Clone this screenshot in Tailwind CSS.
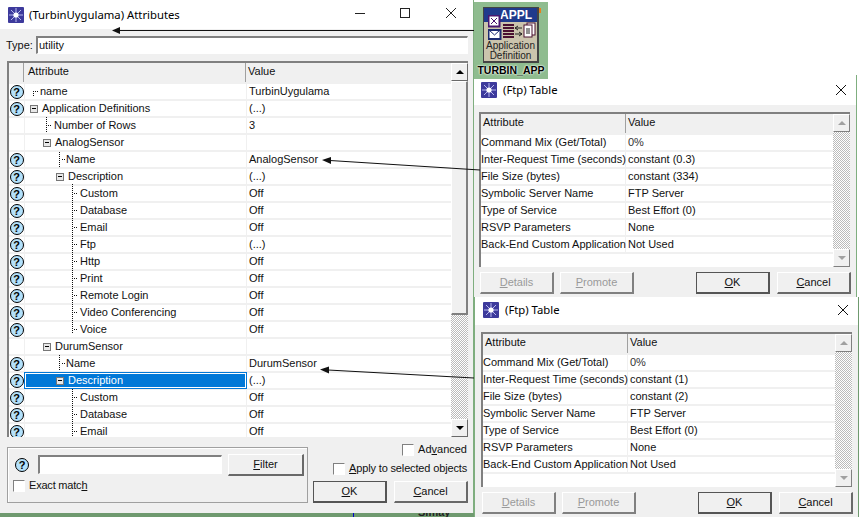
<!DOCTYPE html>
<html><head><meta charset="utf-8"><script src="https://cdn.jsdelivr.net/npm/@tailwindcss/browser@4"></script></head>
<body class="m-0">
<div class="relative w-[862px] h-[517px] overflow-hidden bg-white font-['Liberation_Sans',sans-serif] text-[11px] leading-[15px] text-[#111]">

<!-- desktop behind the windows -->
<div class="absolute left-0 top-[513px] w-[475px] h-[4px] bg-[#6f9a6f] overflow-hidden"><span class="absolute left-[353px] top-0 w-px h-[4px] bg-[#00c]"></span></div>
<div class="absolute left-[418px] top-[505px] text-[11px] font-bold text-[#222]">Simay</div>
<div class="absolute left-[856px] top-[75px] w-px h-[222px] bg-[#7fae7f]"></div>
<div class="absolute left-[857px] top-[297px] w-[2px] h-[220px] bg-[#6f9a6f]"></div>

<!-- main window -->
<div class="absolute left-0 top-0 w-[474px] h-[513px] bg-[#f0f0f0] border-r border-[#7fae7f] flex flex-col">
  <div class="h-[29px] bg-white flex items-center pl-[8px] shrink-0">
    <svg width="16" height="16" viewBox="0 0 16 16" class="shrink-0"><rect width="16" height="16" rx="1" fill="#3d3a9c"/><path d="M8 1V15M1 8H15M3 3L13 13M13 3L3 13" stroke="#b8b8ee" stroke-width="1"/><circle cx="8" cy="8" r="2.6" fill="#fff"/></svg>
    <span class="ml-[5px] font-['Noto_Sans',sans-serif] text-[11.3px] text-black">(TurbinUygulama) Attributes</span>
    <svg width="102" height="16" viewBox="0 0 102 16" class="ml-auto mr-[16px] shrink-0 self-start mt-[6px]"><path d="M0 7.5H10" stroke="#222"/><rect x="45.5" y="2.5" width="9" height="9" fill="none" stroke="#222"/><path d="M91 2L101 12M101 2L91 12" stroke="#222"/></svg>
  </div>
  <div class="flex items-center mt-[7px] pl-[6px] h-[18px] shrink-0">
    <span class="w-[30px]">Type:</span>
    <div class="w-[432px] h-[18px] bg-white border-t-2 border-l-2 border-[#808080] border-r border-b border-r-white border-b-white pl-[1px] leading-[14px]">utility</div>
  </div>

  <div class="relative ml-[7px] mt-[7px] w-[461px] h-[376px] overflow-hidden flex shrink-0 border-t-2 border-l-2 border-[#808080]">
    <div class="w-[442px] flex flex-col">
      <div class="flex h-[19px] bg-[#f0f0f0] shrink-0 mb-[2px]">
        <div class="w-[15px] border-r border-[#a0a0a0]"></div>
        <div class="w-[222px] pl-[4px] border-r border-[#a0a0a0] leading-[16px]">Attribute</div>
        <div class="flex-1 pl-[2px] leading-[16px]">Value</div>
      </div>

      <div class="flex h-[15px] mb-[2px] shrink-0"><div class="w-[15px] bg-white flex items-center justify-center mr-px"><span class="w-[14px] h-[14px] rounded-full border border-black bg-[#b3e1fb] text-[11px] leading-[12px] font-bold text-center text-black">?</span></div><div class="w-[221px] bg-white mr-px pl-[15px]">name</div><div class="flex-1 bg-white pl-[2px]">TurbinUygulama</div></div>
      <div class="flex h-[15px] mb-[2px] shrink-0"><div class="w-[15px] bg-white flex items-center justify-center mr-px"><span class="w-[14px] h-[14px] rounded-full border border-black bg-[#b3e1fb] text-[11px] leading-[12px] font-bold text-center text-black">?</span></div><div class="w-[221px] bg-white mr-px pl-[5px] flex items-center"><span class="w-[8px] h-[8px] bg-[#e8e8e8] border border-[#777] flex items-center justify-center mr-[4px]"><span class="w-[4px] h-px bg-black"></span></span>Application Definitions</div><div class="flex-1 bg-white pl-[2px]">(...)</div></div>
      <div class="flex h-[15px] mb-[2px] shrink-0"><div class="w-[15px] bg-white mr-px"></div><div class="w-[221px] bg-white mr-px pl-[29px]">Number of Rows</div><div class="flex-1 bg-white pl-[2px]">3</div></div>
      <div class="flex h-[15px] mb-[2px] shrink-0"><div class="w-[15px] bg-white mr-px"></div><div class="w-[221px] bg-white mr-px pl-[18px] flex items-center"><span class="w-[8px] h-[8px] bg-[#e8e8e8] border border-[#777] flex items-center justify-center mr-[4px]"><span class="w-[4px] h-px bg-black"></span></span>AnalogSensor</div><div class="flex-1 bg-white pl-[2px]"></div></div>
      <div class="flex h-[15px] mb-[2px] shrink-0"><div class="w-[15px] bg-white flex items-center justify-center mr-px"><span class="w-[14px] h-[14px] rounded-full border border-black bg-[#b3e1fb] text-[11px] leading-[12px] font-bold text-center text-black">?</span></div><div class="w-[221px] bg-white mr-px pl-[41px]">Name</div><div class="flex-1 bg-white pl-[2px]">AnalogSensor</div></div>
      <div class="flex h-[15px] mb-[2px] shrink-0"><div class="w-[15px] bg-white flex items-center justify-center mr-px"><span class="w-[14px] h-[14px] rounded-full border border-black bg-[#b3e1fb] text-[11px] leading-[12px] font-bold text-center text-black">?</span></div><div class="w-[221px] bg-white mr-px pl-[31px] flex items-center"><span class="w-[8px] h-[8px] bg-[#e8e8e8] border border-[#777] flex items-center justify-center mr-[4px]"><span class="w-[4px] h-px bg-black"></span></span>Description</div><div class="flex-1 bg-white pl-[2px]">(...)</div></div>
      <div class="flex h-[15px] mb-[2px] shrink-0"><div class="w-[15px] bg-white flex items-center justify-center mr-px"><span class="w-[14px] h-[14px] rounded-full border border-black bg-[#b3e1fb] text-[11px] leading-[12px] font-bold text-center text-black">?</span></div><div class="w-[221px] bg-white mr-px pl-[55px]">Custom</div><div class="flex-1 bg-white pl-[2px]">Off</div></div>
      <div class="flex h-[15px] mb-[2px] shrink-0"><div class="w-[15px] bg-white flex items-center justify-center mr-px"><span class="w-[14px] h-[14px] rounded-full border border-black bg-[#b3e1fb] text-[11px] leading-[12px] font-bold text-center text-black">?</span></div><div class="w-[221px] bg-white mr-px pl-[55px]">Database</div><div class="flex-1 bg-white pl-[2px]">Off</div></div>
      <div class="flex h-[15px] mb-[2px] shrink-0"><div class="w-[15px] bg-white flex items-center justify-center mr-px"><span class="w-[14px] h-[14px] rounded-full border border-black bg-[#b3e1fb] text-[11px] leading-[12px] font-bold text-center text-black">?</span></div><div class="w-[221px] bg-white mr-px pl-[55px]">Email</div><div class="flex-1 bg-white pl-[2px]">Off</div></div>
      <div class="flex h-[15px] mb-[2px] shrink-0"><div class="w-[15px] bg-white flex items-center justify-center mr-px"><span class="w-[14px] h-[14px] rounded-full border border-black bg-[#b3e1fb] text-[11px] leading-[12px] font-bold text-center text-black">?</span></div><div class="w-[221px] bg-white mr-px pl-[55px]">Ftp</div><div class="flex-1 bg-white pl-[2px]">(...)</div></div>
      <div class="flex h-[15px] mb-[2px] shrink-0"><div class="w-[15px] bg-white flex items-center justify-center mr-px"><span class="w-[14px] h-[14px] rounded-full border border-black bg-[#b3e1fb] text-[11px] leading-[12px] font-bold text-center text-black">?</span></div><div class="w-[221px] bg-white mr-px pl-[55px]">Http</div><div class="flex-1 bg-white pl-[2px]">Off</div></div>
      <div class="flex h-[15px] mb-[2px] shrink-0"><div class="w-[15px] bg-white flex items-center justify-center mr-px"><span class="w-[14px] h-[14px] rounded-full border border-black bg-[#b3e1fb] text-[11px] leading-[12px] font-bold text-center text-black">?</span></div><div class="w-[221px] bg-white mr-px pl-[55px]">Print</div><div class="flex-1 bg-white pl-[2px]">Off</div></div>
      <div class="flex h-[15px] mb-[2px] shrink-0"><div class="w-[15px] bg-white flex items-center justify-center mr-px"><span class="w-[14px] h-[14px] rounded-full border border-black bg-[#b3e1fb] text-[11px] leading-[12px] font-bold text-center text-black">?</span></div><div class="w-[221px] bg-white mr-px pl-[55px]">Remote Login</div><div class="flex-1 bg-white pl-[2px]">Off</div></div>
      <div class="flex h-[15px] mb-[2px] shrink-0"><div class="w-[15px] bg-white flex items-center justify-center mr-px"><span class="w-[14px] h-[14px] rounded-full border border-black bg-[#b3e1fb] text-[11px] leading-[12px] font-bold text-center text-black">?</span></div><div class="w-[221px] bg-white mr-px pl-[55px]">Video Conferencing</div><div class="flex-1 bg-white pl-[2px]">Off</div></div>
      <div class="flex h-[15px] mb-[2px] shrink-0"><div class="w-[15px] bg-white flex items-center justify-center mr-px"><span class="w-[14px] h-[14px] rounded-full border border-black bg-[#b3e1fb] text-[11px] leading-[12px] font-bold text-center text-black">?</span></div><div class="w-[221px] bg-white mr-px pl-[55px]">Voice</div><div class="flex-1 bg-white pl-[2px]">Off</div></div>
      <div class="flex h-[15px] mb-[2px] shrink-0"><div class="w-[15px] bg-white mr-px"></div><div class="w-[221px] bg-white mr-px pl-[18px] flex items-center"><span class="w-[8px] h-[8px] bg-[#e8e8e8] border border-[#777] flex items-center justify-center mr-[4px]"><span class="w-[4px] h-px bg-black"></span></span>DurumSensor</div><div class="flex-1 bg-white pl-[2px]"></div></div>
      <div class="flex h-[15px] mb-[2px] shrink-0"><div class="w-[15px] bg-white flex items-center justify-center mr-px"><span class="w-[14px] h-[14px] rounded-full border border-black bg-[#b3e1fb] text-[11px] leading-[12px] font-bold text-center text-black">?</span></div><div class="w-[221px] bg-white mr-px pl-[41px]">Name</div><div class="flex-1 bg-white pl-[2px]">DurumSensor</div></div>
      <div class="flex h-[15px] mb-[2px] shrink-0"><div class="w-[15px] bg-white flex items-center justify-center mr-px"><span class="w-[14px] h-[14px] rounded-full border border-black bg-[#b3e1fb] text-[11px] leading-[12px] font-bold text-center text-black">?</span></div><div class="w-[221px] bg-[#0078d7] text-white mr-px pl-[30px] flex items-center border border-white outline outline-1 outline-[#0078d7]"><span class="w-[8px] h-[8px] bg-[#e8e8e8] border border-[#777] flex items-center justify-center mr-[4px]"><span class="w-[4px] h-px bg-black"></span></span>Description</div><div class="flex-1 bg-white pl-[2px]">(...)</div></div>
      <div class="flex h-[15px] mb-[2px] shrink-0"><div class="w-[15px] bg-white flex items-center justify-center mr-px"><span class="w-[14px] h-[14px] rounded-full border border-black bg-[#b3e1fb] text-[11px] leading-[12px] font-bold text-center text-black">?</span></div><div class="w-[221px] bg-white mr-px pl-[55px]">Custom</div><div class="flex-1 bg-white pl-[2px]">Off</div></div>
      <div class="flex h-[15px] mb-[2px] shrink-0"><div class="w-[15px] bg-white flex items-center justify-center mr-px"><span class="w-[14px] h-[14px] rounded-full border border-black bg-[#b3e1fb] text-[11px] leading-[12px] font-bold text-center text-black">?</span></div><div class="w-[221px] bg-white mr-px pl-[55px]">Database</div><div class="flex-1 bg-white pl-[2px]">Off</div></div>
      <div class="flex h-[15px] mb-[2px] shrink-0"><div class="w-[15px] bg-white flex items-center justify-center mr-px"><span class="w-[14px] h-[14px] rounded-full border border-black bg-[#b3e1fb] text-[11px] leading-[12px] font-bold text-center text-black">?</span></div><div class="w-[221px] bg-white mr-px pl-[55px]">Email</div><div class="flex-1 bg-white pl-[2px]">Off</div></div>
    </div>
    <div class="w-[17px] flex flex-col shrink-0">
      <div class="h-[18px] bg-[#f0f0f0] border border-t-white border-l-white border-r-[#696969] border-b-[#696969] flex items-center justify-center"><span class="w-0 h-0 border-x-[4px] border-x-transparent border-b-[4px] border-b-black"></span></div>
      <div class="h-[234px] bg-[#f0f0f0] border border-t-white border-l-white border-r-2 border-b-2 border-r-[#808080] border-b-[#808080]"></div>
      <div class="flex-1 bg-[repeating-conic-gradient(#bbb_0_25%,#fff_0_50%)] bg-[length:2px_2px]"></div>
      <div class="h-[18px] bg-[#f0f0f0] border border-t-white border-l-white border-r-[#696969] border-b-[#696969] flex items-center justify-center"><span class="w-0 h-0 border-x-[4px] border-x-transparent border-t-[4px] border-t-black"></span></div>
    </div>
    <!-- tree lines over the grid -->
    <svg class="absolute left-[-9px] top-[-63px] pointer-events-none" width="100" height="440" viewBox="0 0 100 440"><g fill="none" stroke="#111" stroke-dasharray="1 1"><path d="M33.5 91V97M35 91.5H38M46.5 117V133M48 125.5H52M59.5 152V167M62 159.5H65M72.5 184V334M74 193.5H77M74 210.5H77M74 227.5H77M74 244.5H77M74 261.5H77M74 278.5H77M74 295.5H77M74 312.5H77M74 329.5H77M59.5 355V370M62 363.5H65M72.5 389V440M74 397.5H77M74 414.5H77M74 431.5H77"/></g></svg>
  </div>

  <!-- filter -->
  <div class="ml-[7px] mt-[10px] flex shrink-0">
    <div class="w-[301px] h-[56px] border border-[#a0a0a0] shadow-[inset_1px_1px_0_#fff] flex flex-col">
      <div class="flex items-center mt-[5px] ml-[7px]">
        <span class="w-[14px] h-[14px] rounded-full border border-black bg-[#b3e1fb] text-[11px] leading-[12px] font-bold text-center text-black">?</span>
        <div class="ml-[9px] w-[184px] h-[19px] bg-white border-t-2 border-l-2 border-[#808080] border-r border-b border-r-white border-b-white"></div>
        <div class="ml-[6px] w-[76px] h-[22px] mt-[1px] bg-[#f0f0f0] border border-t-white border-l-white border-r-2 border-b-2 border-r-[#696969] border-b-[#696969] flex items-center justify-center"><span><u>F</u>ilter</span></div>
      </div>
      <div class="flex items-center ml-[5px] mt-[2px]">
        <span class="w-[12px] h-[12px] bg-white border border-t-[#808080] border-l-[#808080] border-r-white border-b-white"></span>
        <span class="ml-[4px] tracking-[-0.2px]">Exact matc<u>h</u></span>
      </div>
    </div>
    <div class="w-[160px] flex flex-col items-end -mt-[5px]">
      <div class="flex items-center"><span class="w-[12px] h-[12px] bg-white border border-t-[#808080] border-l-[#808080] border-r-white border-b-white"></span><span class="ml-[4px] mr-px">Ad<u>v</u>anced</span></div>
      <div class="flex items-center mt-[4px]"><span class="w-[12px] h-[12px] bg-white border border-t-[#808080] border-l-[#808080] border-r-white border-b-white"></span><span class="ml-[4px] mr-px tracking-[-0.15px]"><u>A</u>pply to selected objects</span></div>
      <div class="flex gap-[7px] mt-[5px]">
        <div class="w-[74px] h-[22px] bg-[#f0f0f0] border border-[#555] border-r-2 border-b-2 flex items-center justify-center"><span><u>O</u>K</span></div>
        <div class="w-[74px] h-[22px] bg-[#f0f0f0] border border-t-white border-l-white border-r-2 border-b-2 border-r-[#696969] border-b-[#696969] flex items-center justify-center"><span><u>C</u>ancel</span></div>
      </div>
    </div>
  </div>
</div>

<!-- Ftp table 1 -->
<div class="absolute left-[474px] top-[78px] w-[382px] h-[219px] bg-[#f0f0f0] flex flex-col">
  <div class="h-[27px] pb-[4px] bg-white flex items-center pl-[7px] shrink-0">
    <svg width="16" height="16" viewBox="0 0 16 16" class="shrink-0"><rect width="16" height="16" rx="1" fill="#3d3a9c"/><path d="M8 1V15M1 8H15M3 3L13 13M13 3L3 13" stroke="#b8b8ee"/><circle cx="8" cy="8" r="2.6" fill="#fff"/></svg>
    <span class="ml-[6px] font-['Noto_Sans',sans-serif] text-[11.3px] text-black">(Ftp) Table</span>
    <svg width="12" height="12" viewBox="0 0 12 12" class="ml-auto mr-[9px] shrink-0"><path d="M1 1L11 11M11 1L1 11" stroke="#111"/></svg>
  </div>
  <div class="ml-[5px] mt-[7px] w-[371px] h-[155px] flex border-t-2 border-l-2 border-[#808080] shrink-0">
    <div class="w-[352px] flex flex-col">
      <div class="flex h-[19px] shrink-0 mb-[2px]"><div class="w-[145px] pl-[2px] border-r border-[#a0a0a0] leading-[16px]">Attribute</div><div class="flex-1 pl-[2px] leading-[16px]">Value</div></div>
      <div class="flex h-[15px] mb-[2px] shrink-0 bg-white"><div class="w-[144px] mr-px whitespace-nowrap shadow-[1px_0_0_#f0f0f0]">Command Mix (Get/Total)</div><div class="flex-1 pl-[2px] text-[#333]">0%</div></div>
      <div class="flex h-[15px] mb-[2px] shrink-0 bg-white"><div class="w-[144px] mr-px whitespace-nowrap shadow-[1px_0_0_#f0f0f0]">Inter-Request Time (seconds)</div><div class="flex-1 pl-[2px]">constant (0.3)</div></div>
      <div class="flex h-[15px] mb-[2px] shrink-0 bg-white"><div class="w-[144px] mr-px whitespace-nowrap shadow-[1px_0_0_#f0f0f0]">File Size (bytes)</div><div class="flex-1 pl-[2px]">constant (334)</div></div>
      <div class="flex h-[15px] mb-[2px] shrink-0 bg-white"><div class="w-[144px] mr-px whitespace-nowrap shadow-[1px_0_0_#f0f0f0]">Symbolic Server Name</div><div class="flex-1 pl-[2px]">FTP Server</div></div>
      <div class="flex h-[15px] mb-[2px] shrink-0 bg-white"><div class="w-[144px] mr-px whitespace-nowrap shadow-[1px_0_0_#f0f0f0]">Type of Service</div><div class="flex-1 pl-[2px]">Best Effort (0)</div></div>
      <div class="flex h-[15px] mb-[2px] shrink-0 bg-white"><div class="w-[144px] mr-px whitespace-nowrap shadow-[1px_0_0_#f0f0f0]">RSVP Parameters</div><div class="flex-1 pl-[2px]">None</div></div>
      <div class="flex h-[15px] mb-[2px] shrink-0 bg-white"><div class="w-[144px] mr-px whitespace-nowrap shadow-[1px_0_0_#f0f0f0]">Back-End Custom Application</div><div class="flex-1 pl-[2px]">Not Used</div></div>
      <div class="flex-1 bg-white"></div>
    </div>
    <div class="w-[17px] flex flex-col shrink-0">
      <div class="h-[18px] bg-[#f0f0f0] border border-t-white border-l-white border-r-[#808080] border-b-[#808080] flex items-center justify-center"><span class="w-0 h-0 border-x-[4px] border-x-transparent border-b-[4px] border-b-[#a0a0a0]"></span></div>
      <div class="flex-1 bg-[repeating-conic-gradient(#bbb_0_25%,#fff_0_50%)] bg-[length:2px_2px]"></div>
      <div class="h-[18px] bg-[#f0f0f0] border border-t-white border-l-white border-r-[#808080] border-b-[#808080] flex items-center justify-center"><span class="w-0 h-0 border-x-[4px] border-x-transparent border-t-[4px] border-t-[#a0a0a0]"></span></div>
    </div>
  </div>
  <div class="flex ml-[6px] mt-[5px] shrink-0">
    <div class="w-[74px] h-[22px] bg-[#f0f0f0] border border-t-white border-l-white border-r-2 border-b-2 border-r-[#808080] border-b-[#808080] flex items-center justify-center text-[#9a9a9a]"><span><u>D</u>etails</span></div>
    <div class="ml-[6px] w-[74px] h-[22px] bg-[#f0f0f0] border border-t-white border-l-white border-r-2 border-b-2 border-r-[#808080] border-b-[#808080] flex items-center justify-center text-[#9a9a9a]"><span><u>P</u>romote</span></div>
    <div class="ml-[62px] w-[74px] h-[22px] bg-[#f0f0f0] border border-[#555] border-r-2 border-b-2 flex items-center justify-center"><span><u>O</u>K</span></div>
    <div class="ml-[7px] w-[74px] h-[22px] bg-[#f0f0f0] border border-t-white border-l-white border-r-2 border-b-2 border-r-[#696969] border-b-[#696969] flex items-center justify-center"><span><u>C</u>ancel</span></div>
  </div>
</div>

<!-- arrows -->
<svg class="absolute left-0 top-0 pointer-events-none" width="862" height="517" viewBox="0 0 862 517"><path d="M120 30.5H480" stroke="#111" fill="none"/><path d="M112 30.5L120 27V34Z" fill="#111"/><path d="M330 160.5L480 170" stroke="#111" fill="none"/><path d="M322 160L331 157V164Z" fill="#111"/><path d="M328 370L474 378" stroke="#111" fill="none"/><path d="M320 369.5L329 366.5V373.5Z" fill="#111"/></svg>

<!-- application node -->
<div class="absolute left-[474px] top-[2px] w-[74px] h-[77px] bg-[#8fbc8f] overflow-hidden">
  <div class="absolute left-[9px] top-[5px] w-[56px] h-[56px] bg-[#cbc4ad] border border-[#444] border-r-2 border-b-2">
    <div class="h-[14px] bg-[#203a8c] text-white text-[12px] leading-[14px] font-bold text-right pr-[5px]">APPL</div>
    <svg class="absolute left-[4px] top-[7px]" width="50" height="26" viewBox="0 0 50 26"><rect x="0.5" y="0.5" width="11" height="11" fill="#fff" stroke="#4a1670" stroke-width="2"/><path d="M3 3L9 9M9 3L3 9" stroke="#4a1670"/><rect x="0.5" y="15" width="12" height="9" fill="#fff" stroke="#1c2a70" stroke-width="2"/><path d="M1 15L6.5 20L12 15" stroke="#1c2a70" fill="none"/><path d="M15 10H26M15 13H26M15 16H26M15 19H26M15 22H26" stroke="#4a1030" stroke-width="2"/><path d="M27 13H34M30 11L27 13L30 15M27 19H34M31 17L34 19L31 21" stroke="#222" fill="none"/><rect x="39" y="8" width="8" height="12" fill="#fff" stroke="#4a1030"/><rect x="36" y="10" width="8" height="12" fill="#fff" stroke="#4a1030"/><path d="M38 14H42M38 16H42M38 18H42" stroke="#222"/></svg>
    <div class="absolute left-0 right-0 top-[33px] text-center text-[10px] leading-[10px] text-[#222]">Application<br>Definition</div>
  </div>
  <div class="absolute right-[7px] top-[6px] w-[2px] h-[5px] bg-[#e8801c]"></div>
  <div class="absolute left-0 right-0 top-[62px] text-center text-[10.5px] leading-[13px] font-bold text-black [text-shadow:0_0_2px_#fff,0_0_2px_#fff]">TURBIN_APP</div>
</div>

<!-- Ftp table 2 -->
<div class="absolute left-[474px] top-[297px] w-[384px] h-[220px] bg-[#f0f0f0] border-l border-[#7fae7f] flex flex-col">
  <div class="h-[28px] pb-[3px] bg-white flex items-center pl-[8px] shrink-0">
    <svg width="16" height="16" viewBox="0 0 16 16" class="shrink-0"><rect width="16" height="16" rx="1" fill="#3d3a9c"/><path d="M8 1V15M1 8H15M3 3L13 13M13 3L3 13" stroke="#b8b8ee"/><circle cx="8" cy="8" r="2.6" fill="#fff"/></svg>
    <span class="ml-[6px] font-['Noto_Sans',sans-serif] text-[11.3px] text-black">(Ftp) Table</span>
    <svg width="12" height="12" viewBox="0 0 12 12" class="ml-auto mr-[9px] shrink-0"><path d="M1 1L11 11M11 1L1 11" stroke="#111"/></svg>
  </div>
  <div class="ml-[6px] mt-[7px] w-[371px] h-[155px] flex border-t-2 border-l-2 border-[#808080] shrink-0">
    <div class="w-[352px] flex flex-col">
      <div class="flex h-[19px] shrink-0 mb-[2px]"><div class="w-[145px] pl-[2px] border-r border-[#a0a0a0] leading-[16px]">Attribute</div><div class="flex-1 pl-[2px] leading-[16px]">Value</div></div>
      <div class="flex h-[15px] mb-[2px] shrink-0 bg-white"><div class="w-[144px] mr-px whitespace-nowrap shadow-[1px_0_0_#f0f0f0]">Command Mix (Get/Total)</div><div class="flex-1 pl-[2px] text-[#333]">0%</div></div>
      <div class="flex h-[15px] mb-[2px] shrink-0 bg-white"><div class="w-[144px] mr-px whitespace-nowrap shadow-[1px_0_0_#f0f0f0]">Inter-Request Time (seconds)</div><div class="flex-1 pl-[2px]">constant (1)</div></div>
      <div class="flex h-[15px] mb-[2px] shrink-0 bg-white"><div class="w-[144px] mr-px whitespace-nowrap shadow-[1px_0_0_#f0f0f0]">File Size (bytes)</div><div class="flex-1 pl-[2px]">constant (2)</div></div>
      <div class="flex h-[15px] mb-[2px] shrink-0 bg-white"><div class="w-[144px] mr-px whitespace-nowrap shadow-[1px_0_0_#f0f0f0]">Symbolic Server Name</div><div class="flex-1 pl-[2px]">FTP Server</div></div>
      <div class="flex h-[15px] mb-[2px] shrink-0 bg-white"><div class="w-[144px] mr-px whitespace-nowrap shadow-[1px_0_0_#f0f0f0]">Type of Service</div><div class="flex-1 pl-[2px]">Best Effort (0)</div></div>
      <div class="flex h-[15px] mb-[2px] shrink-0 bg-white"><div class="w-[144px] mr-px whitespace-nowrap shadow-[1px_0_0_#f0f0f0]">RSVP Parameters</div><div class="flex-1 pl-[2px]">None</div></div>
      <div class="flex h-[15px] mb-[2px] shrink-0 bg-white"><div class="w-[144px] mr-px whitespace-nowrap shadow-[1px_0_0_#f0f0f0]">Back-End Custom Application</div><div class="flex-1 pl-[2px]">Not Used</div></div>
      <div class="flex-1 bg-white"></div>
    </div>
    <div class="w-[17px] flex flex-col shrink-0">
      <div class="h-[18px] bg-[#f0f0f0] border border-t-white border-l-white border-r-[#808080] border-b-[#808080] flex items-center justify-center"><span class="w-0 h-0 border-x-[4px] border-x-transparent border-b-[4px] border-b-[#a0a0a0]"></span></div>
      <div class="flex-1 bg-[repeating-conic-gradient(#bbb_0_25%,#fff_0_50%)] bg-[length:2px_2px]"></div>
      <div class="h-[18px] bg-[#f0f0f0] border border-t-white border-l-white border-r-[#808080] border-b-[#808080] flex items-center justify-center"><span class="w-0 h-0 border-x-[4px] border-x-transparent border-t-[4px] border-t-[#a0a0a0]"></span></div>
    </div>
  </div>
  <div class="flex ml-[7px] mt-[5px] shrink-0">
    <div class="w-[74px] h-[22px] bg-[#f0f0f0] border border-t-white border-l-white border-r-2 border-b-2 border-r-[#808080] border-b-[#808080] flex items-center justify-center text-[#9a9a9a]"><span><u>D</u>etails</span></div>
    <div class="ml-[6px] w-[74px] h-[22px] bg-[#f0f0f0] border border-t-white border-l-white border-r-2 border-b-2 border-r-[#808080] border-b-[#808080] flex items-center justify-center text-[#9a9a9a]"><span><u>P</u>romote</span></div>
    <div class="ml-[62px] w-[74px] h-[22px] bg-[#f0f0f0] border border-[#555] border-r-2 border-b-2 flex items-center justify-center"><span><u>O</u>K</span></div>
    <div class="ml-[7px] w-[74px] h-[22px] bg-[#f0f0f0] border border-t-white border-l-white border-r-2 border-b-2 border-r-[#696969] border-b-[#696969] flex items-center justify-center"><span><u>C</u>ancel</span></div>
  </div>
</div>

</div>
</body></html>
